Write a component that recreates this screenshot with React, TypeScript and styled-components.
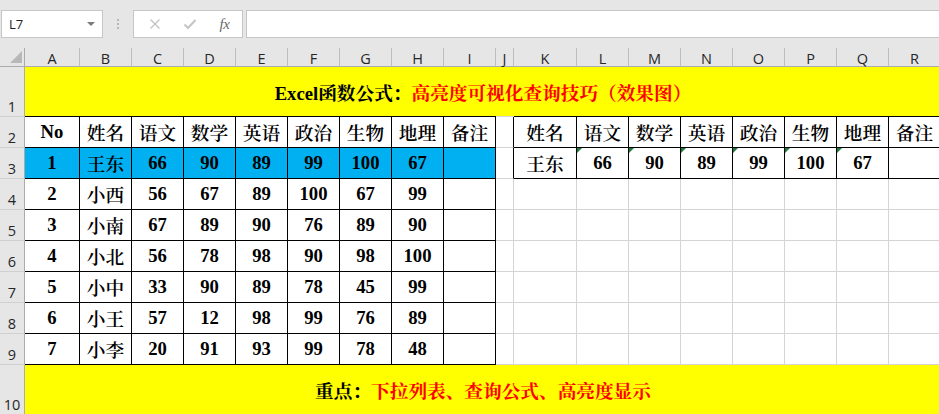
import React from 'react'
import styled, { createGlobalStyle, css } from 'styled-components'

const SERIF = `"Liberation Serif", "Noto Serif CJK SC", "Noto Sans CJK SC", serif`
const UI = `"Open Sans", "Noto Sans", "Liberation Sans", sans-serif`

const GlobalStyle = createGlobalStyle`
  html, body {
    margin: 0;
    padding: 0;
    background: #fff;
    overflow: hidden;
  }
`

const Window = styled.div`
  width: 939px;
  height: 414px;
  overflow: hidden;
  display: flex;
  flex-direction: column;
  background: #e6e6e6;
`

const FormulaBar = styled.div`
  display: flex;
  align-items: flex-start;
  height: 48px;
  flex-shrink: 0;
  box-sizing: border-box;
  padding: 10px 0 0 1px;
`

const NameBox = styled.div`
  width: 102px;
  height: 28px;
  box-sizing: border-box;
  background: #fff;
  border: 1px solid #c6c6c6;
  display: flex;
  align-items: center;
  justify-content: space-between;
  padding: 0 7px 0 7px;
  font: 13px ${UI};
  color: #1e1e1e;
`

const Caret = styled.span`
  width: 0;
  height: 0;
  border-left: 4px solid transparent;
  border-right: 4px solid transparent;
  border-top: 4px solid #7a7a7a;
`

const Grip = styled.div`
  width: 30px;
  height: 28px;
  display: flex;
  align-items: center;
  justify-content: center;
`

const FxBox = styled.div`
  width: 110px;
  height: 28px;
  box-sizing: border-box;
  background: #fff;
  border: 1px solid #c6c6c6;
  display: flex;
  align-items: center;
  padding-left: 3px;
`

const FxSlot = styled.div`
  width: 35px;
  display: flex;
  align-items: center;
  justify-content: center;
`

const FxLabel = styled.span`
  font: italic 15px ${`"Liberation Serif", serif`};
  color: #6a6a6a;
  letter-spacing: -0.5px;
`

const FormulaInput = styled.div`
  flex: 1;
  height: 28px;
  margin-left: 3px;
  margin-right: -2px;
  box-sizing: border-box;
  background: #fff;
  border: 1px solid #c6c6c6;
`

const Sheet = styled.div`
  display: grid;
  grid-template-columns: 25px 55px repeat(8, 52px) 18px 63px repeat(7, 52px);
  grid-template-rows: 19px 50px repeat(8, 31px) 50px;
  background: #fff;
`

const Corner = styled.div`
  box-sizing: border-box;
  background: #e6e6e6;
  border-right: 1px solid #ababab;
  border-bottom: 1px solid #ababab;
  display: flex;
  align-items: flex-end;
  justify-content: flex-end;
  padding: 0 2px 3px 0;
`

const ColHeader = styled.div`
  box-sizing: border-box;
  background: #e6e6e6;
  border-right: 1px solid #bdbdbd;
  border-bottom: 1px solid #ababab;
  display: flex;
  align-items: center;
  justify-content: center;
  padding-top: 3px;
  font: 14.5px ${UI};
  color: #262626;
`

const RowHeader = styled.div`
  box-sizing: border-box;
  background: #e6e6e6;
  border-right: 1px solid #ababab;
  border-bottom: 1px solid #d0d0d0;
  display: flex;
  align-items: flex-end;
  justify-content: center;
  font: 14.5px ${UI};
  line-height: 18px;
  color: #262626;
`

const Banner = styled.div`
  grid-column: span 18;
  box-sizing: border-box;
  background: #ffff00;
  border-bottom: 1px solid #d4d4d4;
  display: flex;
  align-items: center;
  justify-content: center;
  font-family: ${SERIF};
  font-size: 18.67px;
  font-weight: 700;
  color: #000;
  white-space: nowrap;
`

const Red = styled.span`
  color: #ff0000;
`

const Cell = styled.div<{
  $fill?: string
  $boxRight?: boolean
  $boxBottom?: boolean
  $capTop?: boolean
  $weight?: number
  $flag?: boolean
}>`
  position: relative;
  box-sizing: border-box;
  display: flex;
  align-items: center;
  justify-content: center;
  background: ${p => p.$fill ?? '#fff'};
  border-right: 1px solid ${p => (p.$boxRight ? '#000' : '#d4d4d4')};
  border-bottom: 1px solid ${p => (p.$boxBottom ? '#000' : '#d4d4d4')};
  ${p => p.$capTop && css`box-shadow: 0 -1px 0 #000;`}
  font-family: ${SERIF};
  font-size: 18.67px;
  font-weight: ${p => p.$weight ?? 700};
  color: #000;
  white-space: nowrap;
  ${p =>
    p.$flag &&
    css`
      &::before {
        content: '';
        position: absolute;
        left: 0;
        top: 0;
        border-style: solid;
        border-width: 5px 5px 0 0;
        border-color: #1e7a3a transparent transparent transparent;
      }
    `}
`

const letters = 'ABCDEFGHIJKLMNOPQR'.split('')
const headers = ['姓名', '语文', '数学', '英语', '政治', '生物', '地理', '备注']

const students = [
  ['1', '王东', '66', '90', '89', '99', '100', '67'],
  ['2', '小西', '56', '67', '89', '100', '67', '99'],
  ['3', '小南', '67', '89', '90', '76', '89', '90'],
  ['4', '小北', '56', '78', '98', '90', '98', '100'],
  ['5', '小中', '33', '90', '89', '78', '45', '99'],
  ['6', '小王', '57', '12', '98', '99', '76', '89'],
  ['7', '小李', '20', '91', '93', '99', '78', '48'],
]

// CJK cells in the sheet render lighter than the bold numbers
const isCjk = (s: string) => /[\u4e00-\u9fff]/.test(s)

function LeftRow({ values, header, fill }: { values: string[]; header?: boolean; fill?: string }) {
  return (
    <>
      {values.map((v, i) => (
        <Cell
          key={i}
          $fill={fill}
          $boxRight
          $boxBottom
          $capTop={header}
          $weight={isCjk(v) ? 600 : 700}
        >
          {v}
        </Cell>
      ))}
    </>
  )
}

function RightRow({ values, header, flags }: { values: string[]; header?: boolean; flags?: boolean }) {
  return (
    <>
      {values.map((v, i) => (
        <Cell
          key={i}
          $boxRight
          $boxBottom
          $capTop={header}
          $flag={flags && i > 0 && i < 7}
          $weight={isCjk(v) ? 600 : 700}
        >
          {v}
        </Cell>
      ))}
    </>
  )
}

function BlankCells({ count }: { count: number }) {
  return (
    <>
      {Array.from({ length: count }, (_, i) => (
        <Cell key={i} />
      ))}
    </>
  )
}

export default function App() {
  const wang = students[0]
  return (
    <Window>
      <GlobalStyle />
      <FormulaBar>
        <NameBox>
          <span>L7</span>
          <Caret />
        </NameBox>
        <Grip>
          <svg width="4" height="12" viewBox="0 0 4 12">
            <circle cx="2" cy="2" r="1" fill="#a6a6a6" />
            <circle cx="2" cy="6" r="1" fill="#a6a6a6" />
            <circle cx="2" cy="10" r="1" fill="#a6a6a6" />
          </svg>
        </Grip>
        <FxBox>
          <FxSlot>
            <svg width="12" height="12" viewBox="0 0 12 12">
              <path d="M1.5 1.5 L10.5 10.5 M10.5 1.5 L1.5 10.5" stroke="#c4c4c4" strokeWidth="1.4" fill="none" />
            </svg>
          </FxSlot>
          <FxSlot>
            <svg width="14" height="12" viewBox="0 0 14 12">
              <path d="M1.5 6.5 L5 10 L12.5 2" stroke="#c4c4c4" strokeWidth="2" fill="none" />
            </svg>
          </FxSlot>
          <FxSlot>
            <FxLabel>fx</FxLabel>
          </FxSlot>
        </FxBox>
        <FormulaInput />
      </FormulaBar>

      <Sheet>
        <Corner>
          <svg width="12" height="12" viewBox="0 0 12 12">
            <polygon points="12,0 12,12 0,12" fill="#b8b8b8" />
          </svg>
        </Corner>
        {letters.map(l => (
          <ColHeader key={l}>{l}</ColHeader>
        ))}

        <RowHeader>1</RowHeader>
        <Banner>
          Excel函数公式：<Red>高亮度可视化查询技巧（效果图）</Red>
        </Banner>

        <RowHeader>2</RowHeader>
        <LeftRow header values={['No', ...headers]} />
        <Cell $boxRight />
        <RightRow header values={headers} />

        <RowHeader>3</RowHeader>
        <LeftRow fill="#00b0f0" values={[...wang, '']} />
        <Cell $boxRight />
        <RightRow flags values={[...wang.slice(1), '']} />

        {students.slice(1).map((s, i) => (
          <React.Fragment key={s[0]}>
            <RowHeader>{i + 4}</RowHeader>
            <LeftRow values={[...s, '']} />
            <BlankCells count={9} />
          </React.Fragment>
        ))}

        <RowHeader>10</RowHeader>
        <Banner>
          重点：<Red>下拉列表、查询公式、高亮度显示</Red>
        </Banner>
      </Sheet>
    </Window>
  )
}
